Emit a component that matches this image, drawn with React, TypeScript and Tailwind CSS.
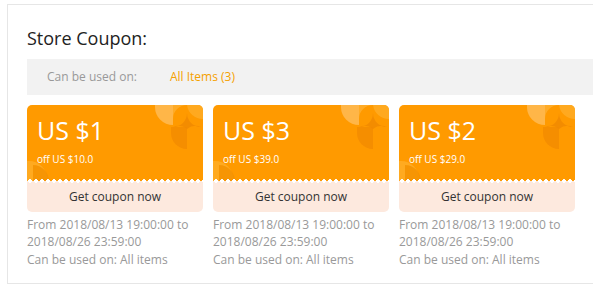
import React from "react";

const coupons = [
  { amt: "US $1", off: "off US $10.0" },
  { amt: "US $3", off: "off US $39.0" },
  { amt: "US $2", off: "off US $29.0" },
];

function TopDeco() {
  return (
    <svg className="absolute right-0 top-0" width="50" height="48" viewBox="0 0 50 48">
      <path d="M2 0 H20 V20 A18 18 0 0 1 2 2 Z" fill="#ffbb55" opacity="0.85" />
      <path d="M20 0 H34 A14 14 0 0 0 20 14 Z" fill="#ffad2a" opacity="0.9" />
      <path d="M20 22 A14 14 0 0 0 34 8 A14 14 0 0 0 48 22 A14 14 0 0 0 34 24 A14 14 0 0 0 20 22 Z" fill="#f28b00" opacity="0.9" />
      <path d="M34 0 H50 V14 A16 16 0 0 1 34 0 Z" fill="#ffab25" opacity="0.85" />
      <path d="M18 22 H34 V44 A16 16 0 0 1 18 28 Z" fill="#f28a00" opacity="0.75" />
    </svg>
  );
}

function BottomDeco() {
  return (
    <svg className="absolute left-0 bottom-0" width="34" height="26" viewBox="0 0 34 26">
      <circle cx="2" cy="24" r="18" fill="#ffac24" opacity="0.9" />
      <path d="M6 10 A16 16 0 0 1 22 26 H6 Z" fill="#f59200" opacity="0.85" />
    </svg>
  );
}

export default function App() {
  const font = { fontFamily: '"Open Sans", "Noto Sans", sans-serif' };
  return (
    <div className="w-[593px] h-[292px] bg-white overflow-hidden pl-[7px] pt-1" style={font}>
      <div className="w-[600px] h-[280px] border border-[#e6e6e6] pl-[19px] pt-[21px]">
        <div className="text-[18px] leading-[24px] text-[#222]">Store Coupon:</div>
        <div className="mt-[9px] h-[36px] bg-[#f2f2f2] flex items-center pl-[20px] text-[12px]">
          <span className="text-[#999]">Can be used on:</span>
          <span className="ml-[33px] text-[#f5a100]">All Items (3)</span>
        </div>
        <div className="mt-[10px] flex gap-[10px]">
          {coupons.map((c, i) => (
            <div key={i} className="w-[176px]">
              <div className="rounded-[5px] overflow-hidden">
                <div className="relative h-[76px] bg-[#ff9a00] pl-[10px] pt-[10px] text-white">
                  <TopDeco />
                  <BottomDeco />
                  <div className="relative text-[25px] leading-[30px]">{c.amt}</div>
                  <div className="relative mt-[7px] text-[10px] leading-[14px]">{c.off}</div>
                  <div className="absolute left-0 right-0 bottom-[-2px] h-[4px] bg-[radial-gradient(circle,#fff_1.6px,transparent_2px)] bg-[length:6px_4px]" />
                </div>
                <div className="h-[31px] bg-[#fde9de] flex items-center justify-center text-[12px] text-[#333] pt-[1px]">
                  Get coupon now
                </div>
              </div>
              <div className="mt-[5px] text-[12px] leading-[16.5px] text-[#999]">
                <div>From 2018/08/13 19:00:00 to</div>
                <div>2018/08/26 23:59:00</div>
                <div className="mt-[2px]">Can be used on: All items</div>
              </div>
            </div>
          ))}
        </div>
      </div>
    </div>
  );
}
